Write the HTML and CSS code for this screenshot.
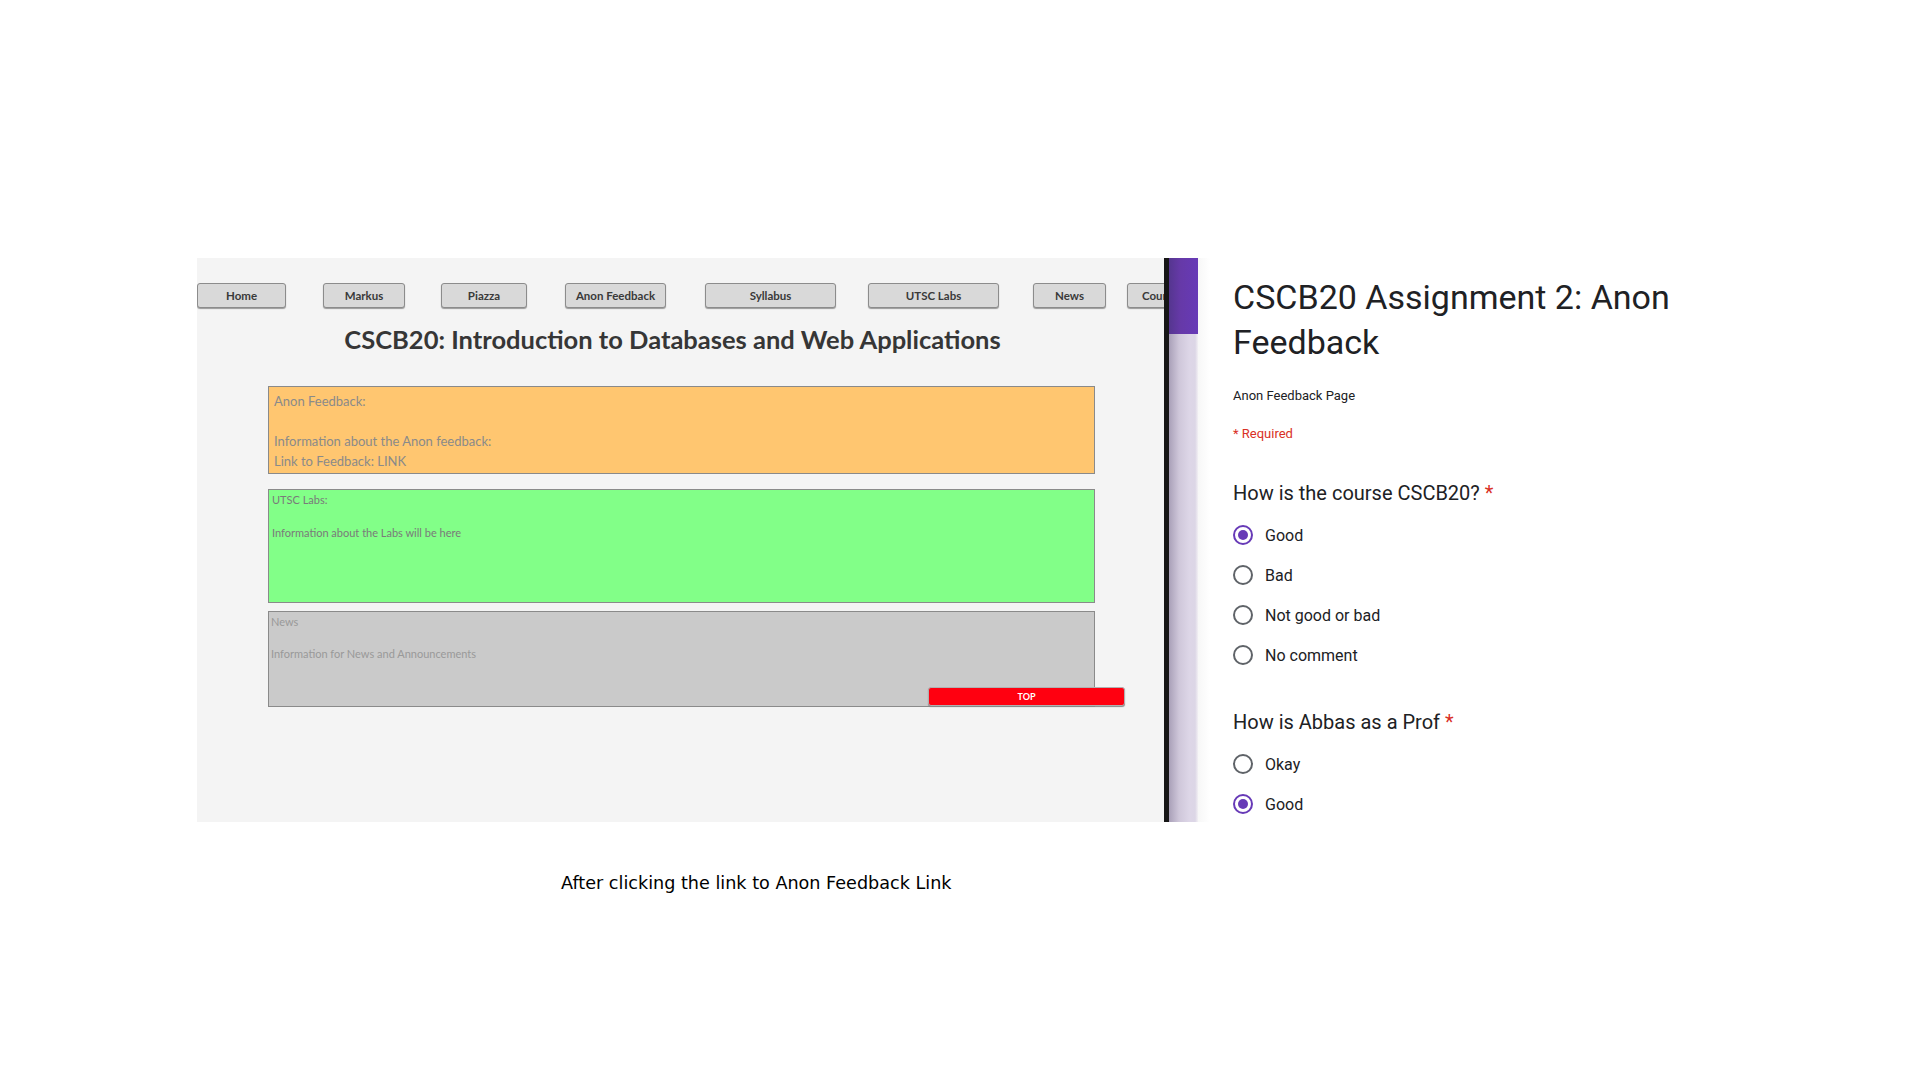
FILE: index.html
```html
<!DOCTYPE html>
<html lang="en">
<head>
<meta charset="utf-8">
<title>After clicking the link to Anon Feedback Link</title>
<link rel="stylesheet" href="styles.css">
</head>
<body>
<div class="stage">
  <div class="shots">
    <section class="site">
      <nav class="nav">
        <span class="btn b1">Home</span>
        <span class="btn b2">Markus</span>
        <span class="btn b3">Piazza</span>
        <span class="btn b4">Anon Feedback</span>
        <span class="btn b5">Syllabus</span>
        <span class="btn b6">UTSC Labs</span>
        <span class="btn b7">News</span>
        <span class="btn b8">Course Team</span>
      </nav>
      <h1 class="site-title">CSCB20: Introduction to Databases and Web Applications</h1>
      <div class="box box-anon">
        <p>Anon Feedback:</p>
        <p class="blank">&nbsp;</p>
        <p>Information about the Anon feedback:</p>
        <p>Link to Feedback: LINK</p>
      </div>
      <div class="box box-labs">
        <p>UTSC Labs:</p>
        <p class="blank">&nbsp;</p>
        <p>Information about the Labs will be here</p>
      </div>
      <div class="box box-news">
        <p>News</p>
        <p class="blank">&nbsp;</p>
        <p>Information for News and Announcements</p>
        <span class="top-btn">TOP</span>
      </div>
    </section>
    <div class="divider"></div>
    <div class="strip"><div class="strip-top"></div><div class="strip-bottom"></div></div>
    <section class="form">
      <h2 class="form-title">CSCB20 Assignment 2: Anon Feedback</h2>
      <p class="form-desc">Anon Feedback Page</p>
      <p class="form-req">* Required</p>
      <div class="question">
        <h3 class="q-title">How is the course CSCB20? <span class="star">*</span></h3>
        <div class="opt"><span class="radio checked"></span><span class="opt-label">Good</span></div>
        <div class="opt"><span class="radio"></span><span class="opt-label">Bad</span></div>
        <div class="opt"><span class="radio"></span><span class="opt-label">Not good or bad</span></div>
        <div class="opt"><span class="radio"></span><span class="opt-label">No comment</span></div>
      </div>
      <div class="question q2">
        <h3 class="q-title">How is Abbas as a Prof <span class="star">*</span></h3>
        <div class="opt"><span class="radio"></span><span class="opt-label">Okay</span></div>
        <div class="opt"><span class="radio checked"></span><span class="opt-label">Good</span></div>
        <div class="opt"><span class="radio"></span><span class="opt-label">Bad</span></div>
      </div>
    </section>
  </div>
  <p class="caption">After clicking the link to Anon Feedback Link</p>
</div>
</body>
</html>
```

FILE: styles.css
```css
* { box-sizing: border-box; }
html, body { margin: 0; padding: 0; background: #ffffff; }
body { font-family: "Lato", "Open Sans", sans-serif; }

.stage { padding-top: 258px; }

.shots {
  display: flex;
  margin-left: 197px;
  height: 564px;
  overflow: hidden;
}

/* left screenshot */
.site {
  width: 967px;
  height: 564px;
  background: #f4f4f4;
  overflow: hidden;
  padding-top: 25px;
}
.nav {
  display: flex;
  white-space: nowrap;
}
.btn {
  flex: none;
  display: flex;
  align-items: center;
  justify-content: center;
  height: 25px;
  background: #d9d9d9;
  border: 1px solid #8c8c8c;
  border-radius: 3px;
  box-shadow: 0 1px 1px #9a9a9a;
  font-family: "Lato", sans-serif;
  font-weight: 700;
  font-size: 11.5px;
  color: #3a3a3a;
}
.b1 { width: 89px; }
.b2 { width: 82px; margin-left: 37px; }
.b3 { width: 86px; margin-left: 36px; }
.b4 { width: 101px; margin-left: 38px; }
.b5 { width: 131px; margin-left: 39px; }
.b6 { width: 131px; margin-left: 32px; }
.b7 { width: 73px; margin-left: 34px; }
.b8 { width: 110px; margin-left: 21px; justify-content: flex-start; padding-left: 14px; }

.site-title {
  margin: 15px 0 0 0;
  height: 47px;
  line-height: 32px;
  text-align: center;
  font-family: "Lato", sans-serif;
  font-weight: 700;
  font-size: 25.5px;
  color: #363636;
  padding-right: 16px;
}

.box {
  position: relative;
  margin-left: 71px;
  width: 827px;
  border: 1px solid #8a8a8a;
}
.box p { margin: 0; }
.box-anon {
  margin-top: 16px;
  height: 88px;
  background: #ffc670;
  padding: 4px 5px;
  font-size: 13px;
  line-height: 20px;
  color: #8a8a8a;
}
.box-labs {
  margin-top: 15px;
  height: 114px;
  background: #82ff88;
  padding: 2px 3px;
  font-size: 11px;
  line-height: 16.5px;
  color: #7a7a7a;
}
.box-news {
  margin-top: 8px;
  height: 96px;
  background: #cacaca;
  padding: 2px 2px;
  font-size: 11px;
  line-height: 16px;
  color: #999999;
}
.top-btn {
  position: absolute;
  left: 659px;
  top: 75px;
  width: 197px;
  height: 19px;
  display: flex;
  align-items: center;
  justify-content: center;
  background: #ff0010;
  border: 1px solid #b0b0b0;
  border-radius: 3px;
  box-shadow: 0 1px 1px #888888;
  color: #ffffff;
  font-size: 9px;
  font-weight: 700;
  line-height: 12px;
}

/* divider & strip */
.divider {
  flex: none;
  width: 5px;
  background: #161616;
}
.strip {
  flex: none;
  width: 29px;
  display: flex;
  flex-direction: column;
}
.strip-top {
  height: 76px;
  background: linear-gradient(to right, #55368f, #6639a8 40%, #673ab7);
}
.strip-bottom {
  flex: 1;
  background: linear-gradient(to right, #a9a0b8, #cfc7da 35%, #ddd6e7 70%, #dcd6e6 90%, #f2f0f4);
}

/* right form */
.form {
  flex: none;
  width: 520px;
  padding: 17px 0 0 35px;
  font-family: "Roboto", sans-serif;
  color: #202124;
  background: linear-gradient(to right, #f7f7f7, #ffffff 12px);
}
.form-title {
  margin: 0;
  width: 480px;
  font-weight: 400;
  font-size: 34px;
  line-height: 45px;
  color: #202124;
}
.form-desc {
  margin: 21px 0 0 0;
  font-size: 13px;
  line-height: 20px;
}
.form-req {
  margin: 18px 0 0 0;
  font-size: 13px;
  line-height: 20px;
  color: #d93025;
}
.question { margin-top: 36px; }
.q2 { margin-top: 34px; }
.q-title {
  margin: 0 0 9px 0;
  font-weight: 400;
  font-size: 20px;
  line-height: 26px;
  color: #202124;
}
.star { color: #d93025; }
.opt {
  display: flex;
  align-items: center;
  height: 40px;
}
.radio {
  flex: none;
  width: 20px;
  height: 20px;
  border: 2px solid #5f6368;
  border-radius: 50%;
  display: flex;
  align-items: center;
  justify-content: center;
}
.radio.checked { border-color: #673ab7; }
.radio.checked::after {
  content: "";
  width: 10px;
  height: 10px;
  border-radius: 50%;
  background: #673ab7;
}
.opt-label {
  margin-left: 12px;
  font-size: 16px;
  color: #202124;
}

.caption {
  margin: 50px 0 0 561px;
  font-family: "DejaVu Sans", sans-serif;
  font-size: 17.6px;
  line-height: 22px;
  color: #000000;
}
```
